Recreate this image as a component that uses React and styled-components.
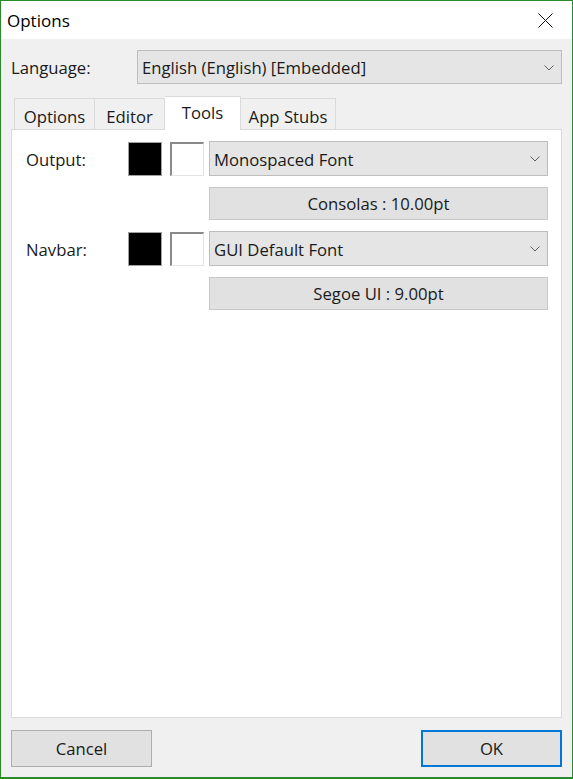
import React from "react";
import styled, { createGlobalStyle, css } from "styled-components";

const GlobalStyle = createGlobalStyle`
  html, body {
    margin: 0;
    padding: 0;
    background: #ffffff;
  }
  body {
    font-family: "Open Sans", "Noto Sans", "Liberation Sans", sans-serif;
    color: #000;
  }
`;

const Window = styled.div`
  width: 573px;
  height: 779px;
  box-sizing: border-box;
  border: 1px solid #2b8a2b;
  border-bottom-width: 2px;
  display: flex;
  flex-direction: column;
  background: #f0f0f0;
`;

const TitleBar = styled.div`
  height: 38px;
  flex: none;
  background: #ffffff;
  display: flex;
  align-items: center;
  justify-content: space-between;
  padding: 0 19px 0 6px;
  font-size: 17px;
`;

const CloseIcon = () => (
  <svg width="15" height="15" viewBox="0 0 15 15">
    <path d="M0.5 0.5 L14.5 14.5 M14.5 0.5 L0.5 14.5" stroke="#111" strokeWidth="1" fill="none" />
  </svg>
);

const Body = styled.div`
  flex: 1;
  display: flex;
  flex-direction: column;
  padding: 11px 10px 10px 10px;
  min-height: 0;
`;

const LangRow = styled.div`
  display: flex;
  align-items: center;
`;

const Label = styled.span`
  font-size: 16.7px;
  width: ${({ $width }) => ($width ? `${$width}px` : "auto")};
  flex: none;
  color: #1a1a1a;
  padding-top: 1px;
`;

const Combo = styled.div`
  flex: 1;
  height: ${({ $h }) => $h}px;
  box-sizing: border-box;
  display: flex;
  align-items: center;
  justify-content: space-between;
  background: #e5e5e5;
  border: 1px solid #bdbdbd;
  padding: 1px 7px 0 4px;
  font-size: 16.7px;
  color: #1a1a1a;
`;

const Chevron = () => (
  <svg width="10" height="6" viewBox="0 0 10 6">
    <path d="M0.5 0.5 L5 5 L9.5 0.5" stroke="#606060" strokeWidth="1" fill="none" />
  </svg>
);

const TabList = styled.div`
  display: flex;
  align-items: flex-end;
  margin-top: 12px;
  padding-left: 3px;
  position: relative;
  z-index: 1;
`;

const Tab = styled.div`
  box-sizing: border-box;
  width: ${({ $w }) => $w}px;
  height: 31px;
  padding-top: 4px;
  display: flex;
  align-items: center;
  justify-content: center;
  font-size: 16.7px;
  color: #1a1a1a;
  background: #f0f0f0;
  border: 1px solid #dadada;
  border-bottom: none;
  & + & {
    border-left: none;
  }
  ${({ $active }) =>
    $active &&
    css`
      height: 34px;
      background: #ffffff;
      padding-top: 0;
      padding-bottom: 2px;
      margin-bottom: -1px;
    `}
`;

const Panel = styled.div`
  flex: 1;
  background: #ffffff;
  border: 1px solid #dadada;
  padding: 11px 13px 0 14px;
  display: grid;
  grid-template-columns: 102px 42px 39px 1fr;
  grid-auto-rows: min-content;
  row-gap: 11px;
  align-items: center;
  align-content: start;
`;

const Swatch = styled.div`
  width: 34px;
  height: 34px;
  box-sizing: border-box;
  background: ${({ $color }) => $color};
  border: 1px solid #a0a0a0;
  ${({ $color }) =>
    $color === "#ffffff" &&
    css`
      border-top: 2px solid #8a8a8a;
      border-left: 2px solid #8a8a8a;
      border-right: 1px solid #e3e3e3;
      border-bottom: 1px solid #e3e3e3;
    `}
`;

const FontButton = styled.div`
  grid-column: 4;
  height: 33px;
  box-sizing: border-box;
  display: flex;
  align-items: center;
  justify-content: center;
  background: #e1e1e1;
  border: 1px solid #c8c8c8;
  font-size: 16.7px;
  color: #1a1a1a;
`;

const Footer = styled.div`
  display: flex;
  justify-content: space-between;
  margin-top: 12px;
`;

const Button = styled.div`
  width: 141px;
  height: 37px;
  box-sizing: border-box;
  display: flex;
  align-items: center;
  justify-content: center;
  background: #e1e1e1;
  border: 1px solid #adadad;
  font-size: 16.7px;
  color: #1a1a1a;
  ${({ $primary }) =>
    $primary &&
    css`
      border: 2px solid #0078d7;
    `}
`;

const rows = [
  { label: "Output:", combo: "Monospaced Font", font: "Consolas : 10.00pt" },
  { label: "Navbar:", combo: "GUI Default Font", font: "Segoe UI : 9.00pt" },
];

const tabs = [
  { name: "Options", w: 81 },
  { name: "Editor", w: 70 },
  { name: "Tools", w: 76 },
  { name: "App Stubs", w: 95 },
];

export default function App() {
  return (
    <>
      <GlobalStyle />
      <Window>
        <TitleBar>
          <span>Options</span>
          <CloseIcon />
        </TitleBar>
        <Body>
          <LangRow>
            <Label $width={126}>Language:</Label>
            <Combo $h={34}>
              <span>English (English) [Embedded]</span>
              <Chevron />
            </Combo>
          </LangRow>
          <TabList>
            {tabs.map((t) => (
              <Tab key={t.name} $w={t.w} $active={t.name === "Tools"}>
                {t.name}
              </Tab>
            ))}
          </TabList>
          <Panel>
            {rows.map((r) => (
              <React.Fragment key={r.label}>
                <Label>{r.label}</Label>
                <Swatch $color="#000000" />
                <Swatch $color="#ffffff" />
                <Combo $h={35}>
                  <span>{r.combo}</span>
                  <Chevron />
                </Combo>
                <FontButton>{r.font}</FontButton>
              </React.Fragment>
            ))}
          </Panel>
          <Footer>
            <Button>Cancel</Button>
            <Button $primary>OK</Button>
          </Footer>
        </Body>
      </Window>
    </>
  );
}
